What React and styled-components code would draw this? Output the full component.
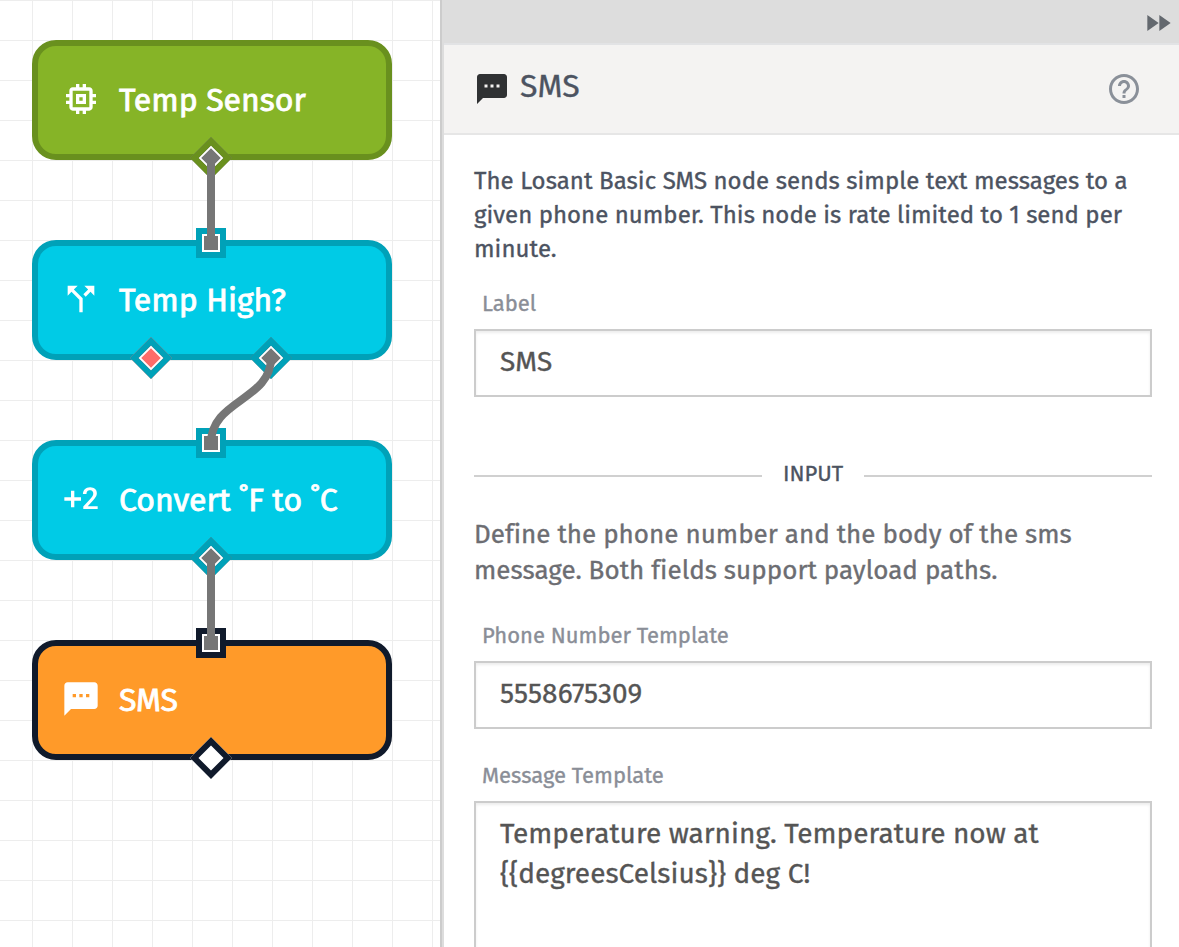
import React from "react";
import styled, { createGlobalStyle } from "styled-components";
import {
  MdMemory,
  MdCallSplit,
  MdExposurePlus2,
  MdSms,
  MdFastForward,
  MdHelpOutline,
} from "react-icons/md";

const GlobalStyle = createGlobalStyle`
  *, *::before, *::after { box-sizing: border-box; }
  body {
    margin: 0;
    background: #fff;
    font-family: "Fira Sans", "Noto Sans", sans-serif;
  }
`;

const Workspace = styled.div`
  display: flex;
  width: 1179px;
  height: 947px;
  overflow: hidden;
`;

const Canvas = styled.main`
  position: relative;
  flex: none;
  width: 440px;
  background-color: #fff;
  background-image: linear-gradient(#ededed 1px, transparent 1px),
    linear-gradient(90deg, #ededed 1px, transparent 1px);
  background-size: 40px 40px;
  background-position: 32px 0;
`;

const NodeBox = styled.div`
  position: absolute;
  left: 32px;
  top: ${(p) => p.$top}px;
  display: flex;
  align-items: center;
  gap: 18px;
  width: 360px;
  height: 120px;
  padding: 0 0 2px 23px;
  border: 6px solid ${(p) => p.$edge};
  border-radius: 24px;
  background: ${(p) => p.$fill};
  color: #fff;

  > svg {
    flex: none;
  }
`;

const NodeLabel = styled.span`
  padding-top: 1px;
  font-size: 32px;
  line-height: 42px;
  -webkit-text-stroke: 0.8px currentColor;
  white-space: pre;
`;

const Port = styled.span`
  position: absolute;
  left: ${(p) => p.$x - 15}px;
  top: ${(p) => p.$y - 15}px;
  width: 30px;
  height: 30px;
  border: 6px solid ${(p) => p.$edge};
  background: ${(p) => p.$fill};
  box-shadow: inset 0 0 0 2px #fff;
  transform: ${(p) => (p.$diamond ? "rotate(45deg) scale(0.985)" : "none")};
`;

const Wires = styled.svg`
  position: absolute;
  inset: 0;
  fill: none;
  stroke: #767676;
  stroke-width: 8;
`;

const Panel = styled.aside`
  flex: 1;
  display: flex;
  flex-direction: column;
  min-width: 0;
  border-left: 2px solid #ccc;
  box-shadow: inset 2px 0 0 #ddd;
  padding-left: 2px;
  -webkit-text-stroke: 0.35px currentColor;
`;

const PanelBar = styled.div`
  flex: none;
  display: flex;
  justify-content: flex-end;
  height: 45px;
  padding: 7px 5px 0 0;
  border-bottom: 2px solid #e2e3e5;
  background: #ddd;
  color: #63686e;
`;

const PanelHeader = styled.header`
  flex: none;
  display: flex;
  align-items: center;
  height: 90px;
  padding: 0 37px 0 30px;
  border-bottom: 2px solid #e6e6e6;
  background: #f4f3f2;
  color: #2f3133;
`;

const PanelTitle = styled.h1`
  flex: 1;
  margin: 0 0 6px 10px;
  color: #4c5361;
  font-size: 32px;
  font-weight: 400;
  line-height: 42px;
  letter-spacing: 0.3px;
`;

const HelpButton = styled.span`
  display: flex;
  color: #8a9099;
`;

const PanelBody = styled.div`
  display: flex;
  flex-direction: column;
  padding: 29px 27px 0 30px;
`;

const Description = styled.p`
  margin: 0 0 23px;
  color: #4c5361;
  font-size: 24px;
  line-height: 34px;
`;

const Hint = styled.p`
  margin: 28px 0 32px;
  color: #6c6d72;
  font-size: 26px;
  line-height: 36px;
`;

const Line = styled.span`
  display: block;
  letter-spacing: ${(p) => p.$track || 0}px;
  white-space: nowrap;
`;

const FieldLabel = styled.label`
  margin: 0 0 10px 8px;
  color: #8a8e97;
  font-size: 22px;
  line-height: 30px;
`;

const TextInput = styled.input`
  display: block;
  flex: none;
  width: 100%;
  height: 68px;
  margin: 0 0 ${(p) => p.$gap}px;
  padding: 0 24px 3px;
  border: 2px solid #ccc;
  border-radius: 0;
  outline: none;
  background: #fff;
  box-shadow: inset 0 2px 3px rgba(0, 0, 0, 0.075);
  color: #555;
  font: 400 28px "Fira Sans", "Noto Sans", sans-serif;
  letter-spacing: ${(p) => p.$track || 0}px;
`;

const MessageBox = styled.div`
  flex: none;
  height: 200px;
  padding: 11px 24px;
  border: 2px solid #ccc;
  background: #fff;
  box-shadow: inset 0 2px 3px rgba(0, 0, 0, 0.075);
  color: #555;
  font-size: 28px;
  line-height: 40px;
`;

const SectionHeading = styled.div`
  display: flex;
  align-items: center;
  gap: 21px;
  height: 30px;
  color: #4c5361;
  font-size: 22px;
  line-height: 30px;

  &::before,
  &::after {
    content: "";
    flex: 1;
    height: 2px;
    margin-top: 4px;
    background: #d0d0d0;
  }
`;

const SectionName = styled.span`
  width: 60px;
  white-space: nowrap;
`;

const GREEN = { fill: "#86b427", edge: "#69901e" };
const CYAN = { fill: "#00cbe6", edge: "#00a1b8" };
const ORANGE = { fill: "#ff9a29", edge: "#101a2b" };
const WIRED = "#767676";

const nodes = [
  { label: "Temp Sensor", top: 40, Icon: MdMemory, colors: GREEN },
  { label: "Temp High?", top: 240, Icon: MdCallSplit, colors: CYAN },
  { label: "Convert ˚F to ˚C", top: 440, Icon: MdExposurePlus2, colors: CYAN },
  { label: "SMS", top: 640, Icon: MdSms, colors: ORANGE },
];

const ports = [
  { x: 211, y: 158, diamond: true, edge: GREEN.edge, fill: WIRED },
  { x: 211, y: 243, edge: CYAN.edge, fill: WIRED },
  { x: 151, y: 358, diamond: true, edge: CYAN.edge, fill: "#ff6c69" },
  { x: 271, y: 358, diamond: true, edge: CYAN.edge, fill: WIRED },
  { x: 211, y: 443, edge: CYAN.edge, fill: WIRED },
  { x: 211, y: 558, diamond: true, edge: CYAN.edge, fill: WIRED },
  { x: 211, y: 643, edge: ORANGE.edge, fill: WIRED },
  { x: 211, y: 758, diamond: true, edge: ORANGE.edge, fill: "#fff" },
];

export default function App() {
  return (
    <>
      <GlobalStyle />
      <Workspace>
        <Canvas>
          {nodes.map(({ label, top, Icon, colors }) => (
            <NodeBox key={label} $top={top} $fill={colors.fill} $edge={colors.edge}>
              <Icon size={40} />
              <NodeLabel>{label}</NodeLabel>
            </NodeBox>
          ))}
          {ports.map((p) => (
            <Port
              key={`${p.x}-${p.y}`}
              $x={p.x}
              $y={p.y}
              $edge={p.edge}
              $fill={p.fill}
              $diamond={p.diamond}
            />
          ))}
          <Wires width="440" height="947">
            <path d="M211 158V243" />
            <path d="M271 358C271 400 211 400 211 443" />
            <path d="M211 558V643" />
          </Wires>
        </Canvas>
        <Panel>
          <PanelBar>
            <MdFastForward size={32} />
          </PanelBar>
          <PanelHeader>
            <MdSms size={36} />
            <PanelTitle>SMS</PanelTitle>
            <HelpButton>
              <MdHelpOutline size={36} />
            </HelpButton>
          </PanelHeader>
          <PanelBody>
            <Description>
              <Line $track={0.06}>The Losant Basic SMS node sends simple text messages to a</Line>
              <Line $track={0.03}>given phone number. This node is rate limited to 1 send per</Line>
              <Line $track={0.05}>minute.</Line>
            </Description>
            <FieldLabel htmlFor="label">Label</FieldLabel>
            <TextInput id="label" $gap={62} $track={0.3} value="SMS" readOnly />
            <SectionHeading>
              <SectionName>INPUT</SectionName>
            </SectionHeading>
            <Hint>
              <Line $track={0.02}>Define the phone number and the body of the sms</Line>
              <Line $track={0.04}>message. Both fields support payload paths.</Line>
            </Hint>
            <FieldLabel htmlFor="phone">Phone Number Template</FieldLabel>
            <TextInput id="phone" $gap={32} $track={0.1} value="5558675309" readOnly />
            <FieldLabel>Message Template</FieldLabel>
            <MessageBox>
              <Line $track={0.04}>Temperature warning. Temperature now at</Line>
              <Line $track={0.05}>{"{{degreesCelsius}} deg C!"}</Line>
            </MessageBox>
          </PanelBody>
        </Panel>
      </Workspace>
    </>
  );
}
